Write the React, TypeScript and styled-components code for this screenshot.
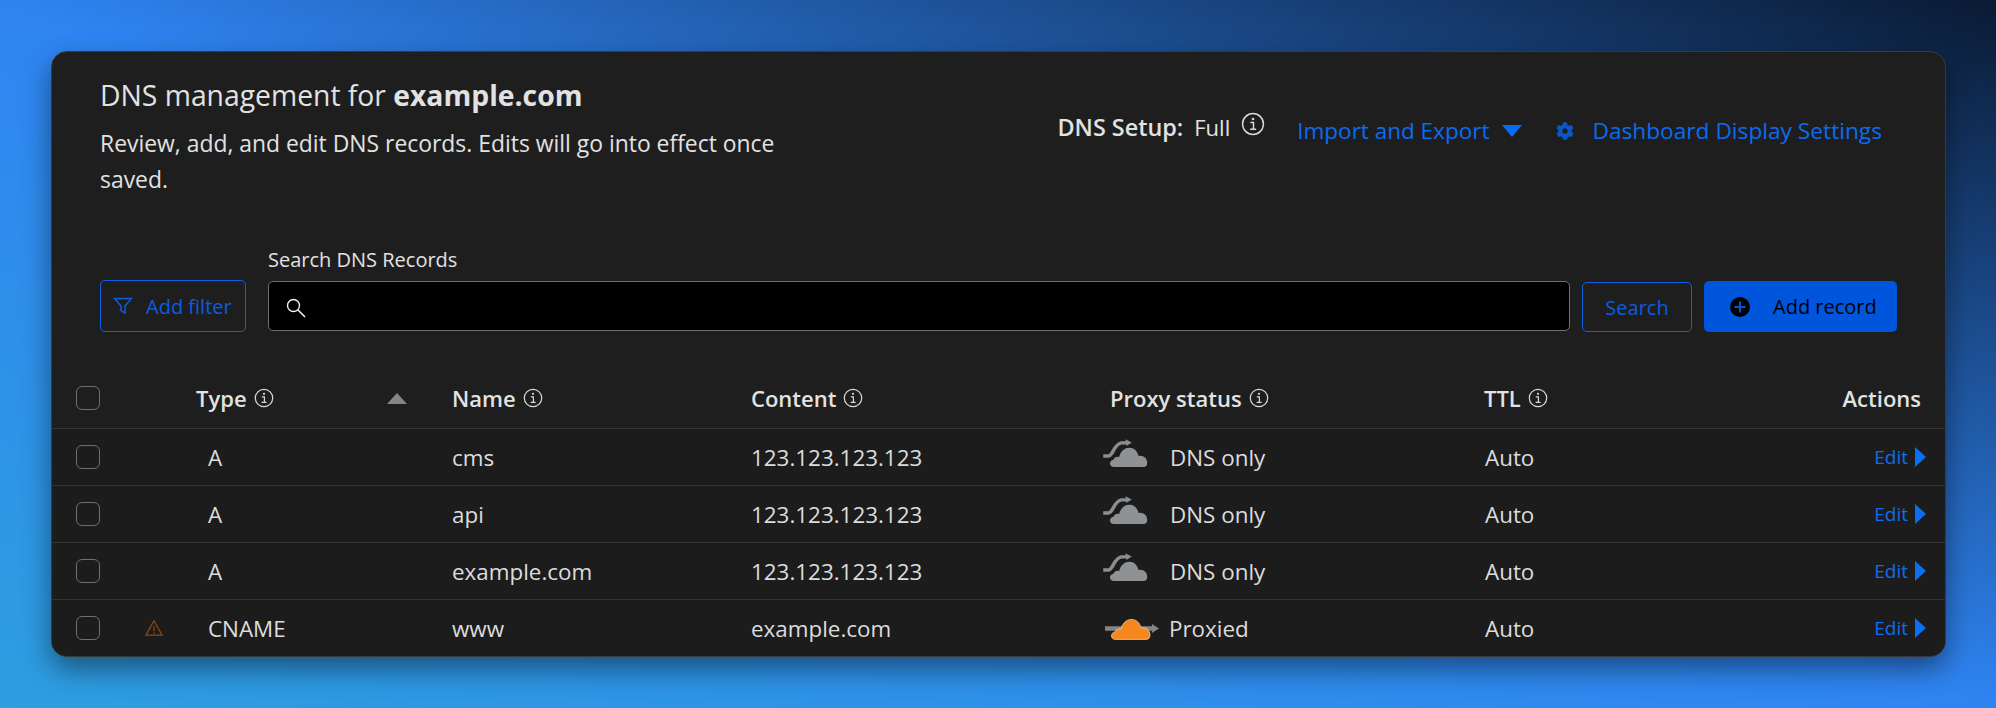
import React from "react";
import styled, { createGlobalStyle } from "styled-components";
import { FaCog } from "react-icons/fa";

const GlobalStyle = createGlobalStyle`
  html, body {
    margin: 0;
    padding: 0;
  }
  body {
    font-family: "Open Sans", "Noto Sans", sans-serif;
    color: #e2e2e2;
  }
  * {
    box-sizing: border-box;
  }
`;

const records = [
  { type: "A", name: "cms", content: "123.123.123.123", proxied: false },
  { type: "A", name: "api", content: "123.123.123.123", proxied: false },
  { type: "A", name: "example.com", content: "123.123.123.123", proxied: false },
  { type: "CNAME", name: "www", content: "example.com", proxied: true },
];

function InfoIcon({ size = 20 }: { size?: number }) {
  return (
    <InfoSvg width={size} height={size} viewBox="0 0 20 20">
      <circle cx="10" cy="10" r="8.7" fill="none" stroke="currentColor" strokeWidth="1.2" />
      <circle cx="10" cy="5.8" r="1.1" fill="currentColor" />
      <path d="M7.8 8.8h2.6v5.4M7.6 14.4h5" fill="none" stroke="currentColor" strokeWidth="1.2" />
    </InfoSvg>
  );
}

function CloudPath({ fill, stroke }: { fill: string; stroke?: string }) {
  return (
    <path
      d="M11.5 29C6.5 29 6 22.5 11 21.5C12 19 14.5 17.8 17 18.6C18.5 12.5 22.5 9 27.5 9C32.5 9 35.8 12.5 37 17.5C42 16.5 46 20 46 24.5C46 27.5 44.5 29 42 29Z"
      fill={fill}
      stroke={stroke}
      strokeWidth={stroke ? 0.7 : 0}
    />
  );
}

function DnsOnlyCloud() {
  return (
    <CloudSvg $offset={-7} width="46" height="29" viewBox="0 0 46 30">
      <path d="M0.5 17.5H6C10.5 17.5 11.5 5.5 19 4H26" fill="none" stroke="#8b8e91" strokeWidth="3.6" />
      <path d="M23.5 0.3L30 3.6L24.5 7.2Z" fill="#8b8e91" />
      <CloudPath fill="#8f9295" />
    </CloudSvg>
  );
}

function ProxiedCloud() {
  return (
    <ProxiedSvg $offset={2} width="54" height="22" viewBox="0 0 54 22">
      <path d="M0 10.5H48" stroke="#858585" strokeWidth="4.5" />
      <path d="M47 6L54 10.5L47 15Z" fill="#858585" />
      <g transform="translate(-1 -7.6)">
        <CloudPath fill="#f6871f" stroke="#f3d9bd" />
      </g>
    </ProxiedSvg>
  );
}

function App() {
  return (
    <Page>
      <GlobalStyle />
      <Card>
        <Header>
          <Intro>
            <Title>
              DNS management for <strong>example.com</strong>
            </Title>
            <Subtitle>
              Review, add, and edit DNS records. Edits will go into effect once saved.
            </Subtitle>
          </Intro>
          <HeaderActions>
            <Setup>
              <strong>DNS Setup:</strong>
              <span>Full</span>
              <SetupInfo>
                <InfoIcon size={24} />
              </SetupInfo>
            </Setup>
            <LinkButton>
              Import and Export
              <svg width="20" height="12" viewBox="0 0 20 12">
                <path d="M0 0H20L10 12Z" fill="#0a6cf2" />
              </svg>
            </LinkButton>
            <SettingsLink>
              <FaCog size={18} color="#0a57c8" />
              Dashboard Display Settings
            </SettingsLink>
          </HeaderActions>
        </Header>

        <Toolbar>
          <FilterButton>
            <svg width="20" height="20" viewBox="0 0 20 20">
              <path
                d="M1.5 2.5H18.5L12 10V17L8 14.5V10Z"
                fill="none"
                stroke="#0b60e6"
                strokeWidth="1.4"
              />
            </svg>
            Add filter
          </FilterButton>
          <SearchField>
            <SearchLabel>Search DNS Records</SearchLabel>
            <SearchBox>
              <svg width="22" height="22" viewBox="0 0 22 22">
                <circle cx="8.5" cy="8.5" r="6" fill="none" stroke="#f0f0f0" strokeWidth="1.4" />
                <path d="M13 13L20 20" stroke="#f0f0f0" strokeWidth="1.6" />
              </svg>
            </SearchBox>
          </SearchField>
          <SearchButton>Search</SearchButton>
          <AddButton>
            <svg width="20" height="20" viewBox="0 0 20 20">
              <circle cx="10" cy="10" r="10" fill="#000" />
              <path d="M10 4.5V15.5M4.5 10H15.5" stroke="#0055dd" strokeWidth="2" />
            </svg>
            Add record
          </AddButton>
        </Toolbar>

        <HeadRow>
          <Checkbox />
          <HeadType>
            Type <InfoIcon />
            <SortArrow />
          </HeadType>
          <HeadCell>
            Name <InfoIcon />
          </HeadCell>
          <HeadCell>
            Content <InfoIcon />
          </HeadCell>
          <HeadCell>
            Proxy status <InfoIcon />
          </HeadCell>
          <HeadCell>
            TTL <InfoIcon />
          </HeadCell>
          <HeadActions>Actions</HeadActions>
        </HeadRow>

        {records.map((record) => (
          <Row key={record.name}>
            <Checkbox />
            <WarnCell>
              {record.proxied && (
                <svg width="18" height="18" viewBox="0 0 20 18">
                  <path d="M10 1L19 17H1Z" fill="none" stroke="#8f4a12" strokeWidth="1.4" />
                  <path d="M10 6.5V12.5M10 13.8V15.4" stroke="#8f4a12" strokeWidth="1.3" />
                </svg>
              )}
            </WarnCell>
            <span>{record.type}</span>
            <span>{record.name}</span>
            <span>{record.content}</span>
            <ProxyCell $proxied={record.proxied}>
              {record.proxied ? <ProxiedCloud /> : <DnsOnlyCloud />}
              {record.proxied ? "Proxied" : "DNS only"}
            </ProxyCell>
            <span>Auto</span>
            <EditLink>
              Edit
              <svg width="11" height="20" viewBox="0 0 11 20">
                <path d="M0 0L11 10L0 20Z" fill="#0a6ff2" />
              </svg>
            </EditLink>
          </Row>
        ))}
      </Card>
    </Page>
  );
}

const Page = styled.div`
  width: 1996px;
  height: 708px;
  padding: 51px 50px 51px 51px;
  overflow: hidden;
  background: linear-gradient(to bottom left, #0a1a33 0%, #2f84f2 50%, #2d9ee0 100%);
`;
const Card = styled.main`
  height: 606px;
  background: #1e1e1e;
  border: 1px solid #3a3a3a;
  border-radius: 16px;
  box-shadow: 0 12px 28px rgba(0, 0, 0, 0.45);
  overflow: hidden;
`;
const Header = styled.header`
  display: flex;
  justify-content: space-between;
  padding: 24px 63px 0 48px;
`;
const Intro = styled.div`
  width: 700px;
`;
const Title = styled.h1`
  margin: 0 0 12px;
  font-size: 28.3px;
  line-height: 38px;
  font-weight: 400;
  strong {
    font-weight: 700;
  }
`;
const Subtitle = styled.p`
  margin: 0;
  font-size: 22.9px;
  line-height: 36px;
`;
const HeaderActions = styled.div`
  display: flex;
  align-items: center;
  height: 66px;
  margin-top: 24px;
  font-size: 22px;
`;
const Setup = styled.div`
  display: flex;
  align-items: center;
  gap: 11px;
  margin-top: -12px;
  margin-right: 32px;
  strong {
    font-size: 23.4px;
    font-weight: 600;
  }
`;
const SetupInfo = styled.span`
  display: flex;
  margin-top: -6px;
`;
const LinkButton = styled.a`
  display: flex;
  align-items: center;
  gap: 13px;
  margin-top: -5px;
  margin-right: 34px;
  color: #0a6cf2;
  font-size: 22.5px;
`;
const SettingsLink = styled.a`
  display: flex;
  align-items: center;
  gap: 18px;
  margin-top: -5px;
  color: #0a6cf2;
  font-size: 22.7px;
`;
const InfoSvg = styled.svg`
  flex: none;
  color: #d8d8d8;
`;
const Toolbar = styled.div`
  display: flex;
  align-items: flex-end;
  margin-top: 51px;
  padding: 0 48px;
`;
const FilterButton = styled.button`
  display: flex;
  align-items: center;
  gap: 13px;
  width: 146px;
  height: 52px;
  padding: 0 0 0 12px;
  margin-right: 22px;
  background: none;
  border: 1px solid #0b60e6;
  border-radius: 5px;
  color: #0a5ce0;
  font: inherit;
  font-size: 20px;
  white-space: nowrap;
`;
const SearchField = styled.label`
  display: flex;
  flex-direction: column;
  gap: 10px;
  width: 1302px;
  margin-right: 12px;
  margin-bottom: 1px;
`;
const SearchLabel = styled.span`
  font-size: 20px;
  line-height: 22px;
`;
const SearchBox = styled.div`
  display: flex;
  align-items: center;
  height: 50px;
  padding: 4px 0 0 16px;
  background: #000;
  border: 1px solid #6f6f6f;
  border-radius: 5px;
`;
const SearchButton = styled.button`
  width: 110px;
  height: 50px;
  margin-right: 12px;
  background: none;
  border: 1px solid #0b60e6;
  border-radius: 5px;
  color: #0a5ce0;
  font: inherit;
  font-size: 20px;
`;
const AddButton = styled.button`
  display: flex;
  align-items: center;
  gap: 23px;
  width: 193px;
  height: 51px;
  padding: 0 0 0 26px;
  background: #0055dd;
  border: none;
  border-radius: 5px;
  color: #000;
  font: inherit;
  font-size: 20px;
  white-space: nowrap;
`;
const Checkbox = styled.span`
  display: block;
  width: 24px;
  height: 24px;
  border: 1px solid #6f6f6f;
  border-radius: 6px;
`;
const HeadRow = styled.div`
  display: grid;
  grid-template-columns: 120px 256px 299px 359px 374px 1fr 140px;
  align-items: center;
  height: 96px;
  padding: 36px 24px 0 24px;
  font-size: 22px;
  font-weight: 600;
`;
const HeadCell = styled.div`
  display: flex;
  align-items: center;
  gap: 7px;
`;
const HeadType = styled(HeadCell)`
  padding-right: 45px;
`;
const SortArrow = styled.i`
  margin-left: auto;
  border-left: 10px solid transparent;
  border-right: 10px solid transparent;
  border-bottom: 11px solid #858585;
`;
const HeadActions = styled.div`
  text-align: right;
`;
const Row = styled.div`
  display: grid;
  grid-template-columns: 69px 63px 244px 299px 351px 383px 1fr 100px;
  align-items: center;
  height: 57px;
  padding: 0 19px 0 24px;
  background: #1c1c1c;
  border-top: 1px solid #333;
  font-size: 22.4px;
  color: #dcdcdc;
`;
const WarnCell = styled.div`
  display: flex;
`;
const ProxyCell = styled.div<{ $proxied: boolean }>`
  display: flex;
  align-items: center;
  gap: ${({ $proxied }) => ($proxied ? "10px" : "22px")};
`;
const CloudSvg = styled.svg<{ $offset: number }>`
  flex: none;
  margin-top: ${({ $offset }) => $offset}px;
`;
const ProxiedSvg = styled(CloudSvg)`
  margin-left: 3px;
`;
const EditLink = styled.a`
  display: flex;
  align-items: center;
  justify-content: flex-end;
  gap: 7px;
  color: #0f6cf0;
  font-size: 19px;
`;

export default App;
